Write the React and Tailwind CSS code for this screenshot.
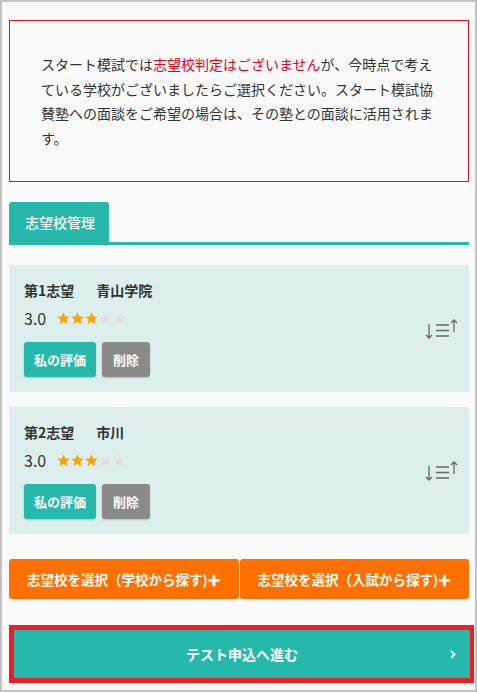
import React from "react";

const choices = [
  { rank: 1, name: "青山学院", score: "3.0", stars: 3 },
  { rank: 2, name: "市川", score: "3.0", stars: 3 },
];

const SortIcon = () => (
  <svg width="34" height="22" viewBox="0 0 34 22" fill="none" stroke="#666" strokeWidth="1.3">
    <path d="M4 6V20M1 17L4 20L7 17" />
    <path d="M11 7H24M11 12.5H24M11 18H24" />
    <path d="M29 2V14M26 5L29 2L32 5" />
  </svg>
);

const Stars = ({ count }) => (
  <div className="flex gap-[1px]">
    {[1, 2, 3, 4, 5].map((i) => (
      <svg key={i} width="13" height="13" viewBox="0 0 24 24">
        <path
          d="M12 0.5L15.3 8.2L23.5 8.9L17.3 14.3L19.2 22.5L12 18.2L4.8 22.5L6.7 14.3L0.5 8.9L8.7 8.2Z"
          fill={i <= count ? "#ffa200" : "#e2e2e2"}
        />
      </svg>
    ))}
  </div>
);

const ChoiceCard = ({ choice }) => (
  <div className="flex items-center justify-between bg-[#dcefed] pl-[15px] pr-[10px] pt-[15px] pb-[15px]">
    <div>
      <div className="flex h-[20px] items-center text-[14px] font-bold text-[#333]">
        <span>第{choice.rank}志望</span>
        <span className="ml-[22px]">{choice.name}</span>
      </div>
      <div className="mt-[6px] flex h-[24px] items-center gap-[11px]">
        <span className="text-[16px] text-[#333]">{choice.score}</span>
        <Stars count={choice.stars} />
      </div>
      <div className="mt-[12px] flex gap-[6px]">
        <button className="h-[35px] w-[72px] rounded-[3px] bg-[#26b8aa] text-[13px] font-bold text-white shadow-[0_1px_2px_rgba(0,0,0,0.2)]">
          私の評価
        </button>
        <button className="h-[35px] w-[48px] rounded-[3px] bg-[#8a8a8a] text-[13px] font-bold text-white shadow-[0_1px_2px_rgba(0,0,0,0.2)]">
          削除
        </button>
      </div>
    </div>
    <SortIcon />
  </div>
);

const App = () => {
  return (
    <div
      className="h-[692px] w-[477px] border-2 border-[#c3c3c3] bg-[#fafafa] pl-[7px] pr-[6px] pt-[18px]"
      style={{ fontFamily: '"Noto Sans CJK JP", "Noto Sans", sans-serif' }}
    >
      <div className="border border-[#d9121b] px-[31px] py-[31px] text-[14px] leading-[24.5px] text-[#333]">
        スタート模試では
        <span className="text-[#e60012]">志望校判定はございません</span>
        が、今時点で考えている学校がございましたらご選択ください。スタート模試協賛塾への面談をご希望の場合は、その塾との面談に活用されます。
      </div>

      <div className="mt-[20px] border-b-[3px] border-[#26b8aa]">
        <div className="flex h-[40px] w-[100px] items-center rounded-t-[3px] bg-[#26b8aa] pl-[16px] text-[14px] font-medium text-white">
          志望校管理
        </div>
      </div>

      <div className="mt-[20px] flex flex-col gap-[15px]">
        {choices.map((c) => (
          <ChoiceCard key={c.rank} choice={c} />
        ))}
      </div>

      <div className="mt-[25px] flex gap-[1px]">
        <button className="flex h-[40px] flex-1 items-center justify-center rounded-[3px] bg-[#ff7000] text-[13.5px] font-bold text-white">
          志望校を選択（学校から探す)<span className="text-[13px] leading-none">✚</span>
        </button>
        <button className="flex h-[40px] flex-1 items-center justify-center rounded-[3px] bg-[#ff7000] text-[13.5px] font-bold text-white">
          志望校を選択（入試から探す)<span className="text-[13px] leading-none">✚</span>
        </button>
      </div>

      <div className="mt-[26px] w-[465px] border-[5px] border-r-[4px] border-[#ee1c25]">
        <button className="relative flex h-[48px] w-full items-center justify-center bg-[#26b8aa] text-[14px] font-bold text-white">
          テスト申込へ進む
          <svg className="absolute right-[14px] top-[20px]" width="6" height="9" viewBox="0 0 6 9" fill="none" stroke="white" strokeWidth="1.8">
            <path d="M1 1L4.5 4.5L1 8" />
          </svg>
        </button>
      </div>
    </div>
  );
};

export default App;
